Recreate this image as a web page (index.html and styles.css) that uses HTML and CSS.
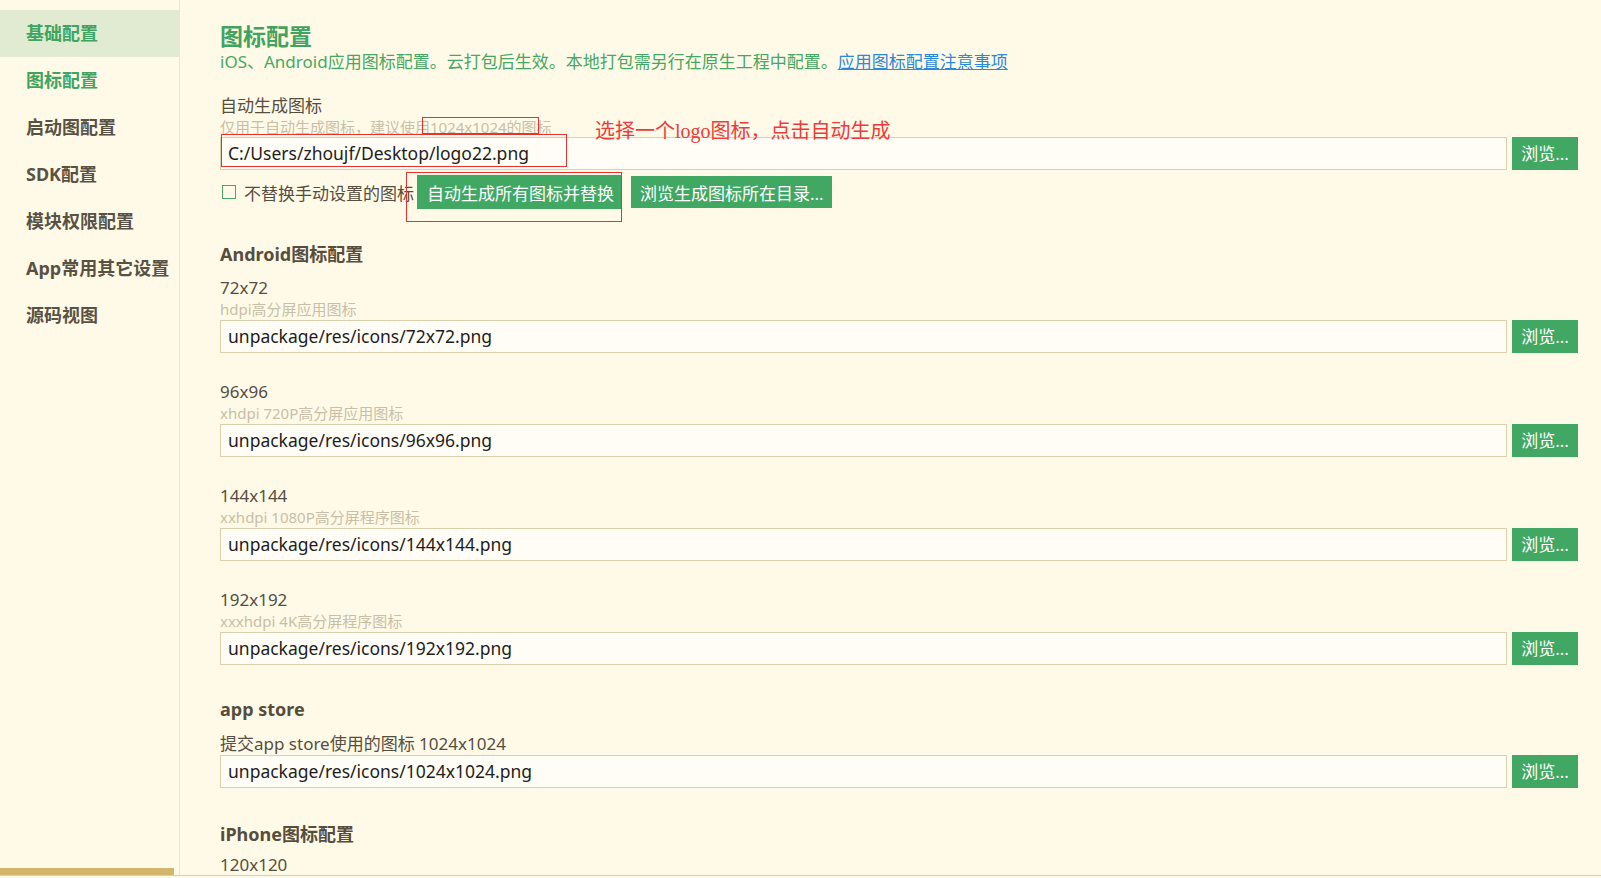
FILE: index.html
```html
<!DOCTYPE html>
<html lang="zh-CN">
<head>
<meta charset="utf-8">
<title>图标配置</title>
<link rel="stylesheet" href="styles.css">
</head>
<body>
<div class="page">
  <div class="app">
    <aside class="sidebar">
      <nav class="nav">
        <div class="nav-item active">基础配置</div>
        <div class="nav-item hover">图标配置</div>
        <div class="nav-item">启动图配置</div>
        <div class="nav-item">SDK配置</div>
        <div class="nav-item">模块权限配置</div>
        <div class="nav-item">App常用其它设置</div>
        <div class="nav-item">源码视图</div>
      </nav>
      <div class="side-bar-bottom"></div>
    </aside>
    <main class="main">
      <h1 class="title">图标配置</h1>
      <p class="subtitle">iOS、Android应用图标配置。云打包后生效。本地打包需另行在原生工程中配置。<a class="link" href="#">应用图标配置注意事项</a></p>

      <section class="field auto-field">
        <div class="label">自动生成图标</div>
        <div class="hint">仅用于自动生成图标，建议使用1024x1024的图标</div>
        <div class="input-row">
          <div class="input">C:/Users/zhoujf/Desktop/logo22.png</div>
          <button class="btn browse">浏览...</button>
        </div>
        <div class="check-row">
          <span class="checkbox"></span>
          <span class="check-label">不替换手动设置的图标</span>
          <button class="btn action">自动生成所有图标并替换</button>
          <button class="btn action second">浏览生成图标所在目录...</button>
        </div>
      </section>

      <h2 class="section-title android">Android图标配置</h2>

      <section class="field group first-group">
        <div class="label">72x72</div>
        <div class="hint">hdpi高分屏应用图标</div>
        <div class="input-row">
          <div class="input">unpackage/res/icons/72x72.png</div>
          <button class="btn browse">浏览...</button>
        </div>
      </section>
      <section class="field group">
        <div class="label">96x96</div>
        <div class="hint">xhdpi 720P高分屏应用图标</div>
        <div class="input-row">
          <div class="input">unpackage/res/icons/96x96.png</div>
          <button class="btn browse">浏览...</button>
        </div>
      </section>
      <section class="field group">
        <div class="label">144x144</div>
        <div class="hint">xxhdpi 1080P高分屏程序图标</div>
        <div class="input-row">
          <div class="input">unpackage/res/icons/144x144.png</div>
          <button class="btn browse">浏览...</button>
        </div>
      </section>
      <section class="field group">
        <div class="label">192x192</div>
        <div class="hint">xxxhdpi 4K高分屏程序图标</div>
        <div class="input-row">
          <div class="input">unpackage/res/icons/192x192.png</div>
          <button class="btn browse">浏览...</button>
        </div>
      </section>

      <h2 class="section-title appstore">app store</h2>
      <section class="field store-field">
        <div class="label">提交app store使用的图标 1024x1024</div>
        <div class="input-row">
          <div class="input">unpackage/res/icons/1024x1024.png</div>
          <button class="btn browse">浏览...</button>
        </div>
      </section>

      <h2 class="section-title iphone">iPhone图标配置</h2>
      <section class="field iphone-field">
        <div class="label">120x120</div>
      </section>
    </main>
  </div>

  <div class="mark mark-hint"></div>
  <div class="mark mark-input"></div>
  <div class="mark mark-button"></div>
  <div class="mark-text">选择一个logo图标，点击自动生成</div>
</div>
</body>
</html>
```

FILE: styles.css
```css
* { box-sizing: border-box; }

html, body {
  margin: 0;
  padding: 0;
  background: #fffae8;
}

body {
  font-family: "Noto Sans", "Noto Sans CJK SC", sans-serif;
  color: #5b5242;
  width: 1601px;
  height: 878px;
  overflow: hidden;
}

.page {
  position: relative;
  width: 1601px;
  height: 878px;
}

.app {
  display: flex;
  height: 876px;
  border-bottom: 1px solid #ddd0a8;
}

/* Sidebar */
.sidebar {
  width: 180px;
  flex: none;
  border-right: 1px solid #efe5c8;
  display: flex;
  flex-direction: column;
  padding-top: 10px;
}

.nav-item {
  height: 47px;
  line-height: 47px;
  padding-left: 26px;
  font-size: 18px;
  font-weight: 700;
  color: #595244;
  white-space: nowrap;
}

.nav-item.active {
  background: #e0ebd2;
  color: #3fa45f;
}

.nav-item.hover {
  color: #3fa45f;
}

.side-bar-bottom {
  margin-top: auto;
  width: 174px;
  height: 7px;
  background: #d3b66b;
}

/* Main */
.main {
  flex: 1;
  min-width: 0;
  padding: 22px 23px 0 40px;
  overflow: hidden;
}

.title {
  margin: 0;
  font-size: 23px;
  line-height: 29px;
  font-weight: 700;
  color: #3fa45f;
}

.subtitle {
  margin: 0;
  font-size: 17px;
  line-height: 22px;
  color: #45a862;
  white-space: nowrap;
}

.link {
  color: #2a88de;
  text-decoration: underline;
}

.label {
  font-size: 17px;
  line-height: 22px;
  color: #574e3f;
  white-space: nowrap;
}

.hint {
  font-size: 15px;
  line-height: 21px;
  color: #c8bfa7;
  white-space: nowrap;
}

.auto-field { margin-top: 22px; }
.auto-field .hint { line-height: 20px; }

.input-row {
  display: flex;
  gap: 5px;
  height: 33px;
}

.input {
  flex: 1;
  min-width: 0;
  height: 33px;
  border: 1px solid #dbd0ab;
  background: #fffdf5;
  padding-left: 7px;
  font-size: 17.5px;
  line-height: 30px;
  color: #1e1e1e;
  white-space: nowrap;
  overflow: hidden;
}

.btn {
  border: none;
  margin: 0;
  background: #41a863;
  color: #ffffff;
  font-family: "Noto Sans", "Noto Sans CJK SC", sans-serif;
  font-size: 17px;
  padding: 0;
  cursor: pointer;
}

.browse {
  width: 66px;
  height: 33px;
  flex: none;
  line-height: 33px;
}

.check-row {
  margin-top: 5px;
  height: 34px;
  display: flex;
  align-items: center;
}

.checkbox {
  width: 14px;
  height: 14px;
  border: 1.5px solid #4aa866;
  margin-left: 2px;
  margin-right: 8px;
  flex: none;
}

.check-label {
  font-size: 17px;
  color: #574e3f;
  margin-right: 3px;
  white-space: nowrap;
}

.action {
  height: 34px;
  padding: 0 8px 0 10px;
  white-space: nowrap;
}

.action.second {
  margin-left: 9px;
  height: 32px;
  padding: 0 8px 0 9px;
}

.section-title {
  margin: 0;
  font-size: 18px;
  line-height: 24px;
  font-weight: 700;
  color: #574d3d;
}

.section-title.android { margin-top: 33px; }

.group { margin-top: 28px; }
.group.first-group { margin-top: 11px; }

.section-title.appstore { margin-top: 32px; }

.store-field { margin-top: 12px; }

.section-title.iphone { margin-top: 34px; }

.iphone-field { margin-top: 8px; }

/* Red annotations */
.mark {
  position: absolute;
  border: 1px solid #e8322f;
}

.mark-hint {
  left: 422px;
  top: 117px;
  width: 117px;
  height: 17px;
}

.mark-input {
  left: 221px;
  top: 134px;
  width: 346px;
  height: 33px;
}

.mark-button {
  left: 406px;
  top: 172px;
  width: 216px;
  height: 50px;
}

.mark-text {
  position: absolute;
  left: 595px;
  top: 118px;
  font-family: "Liberation Serif", "Noto Sans CJK SC", serif;
  font-size: 20px;
  line-height: 26px;
  color: #ef3a3a;
  white-space: nowrap;
}
```
